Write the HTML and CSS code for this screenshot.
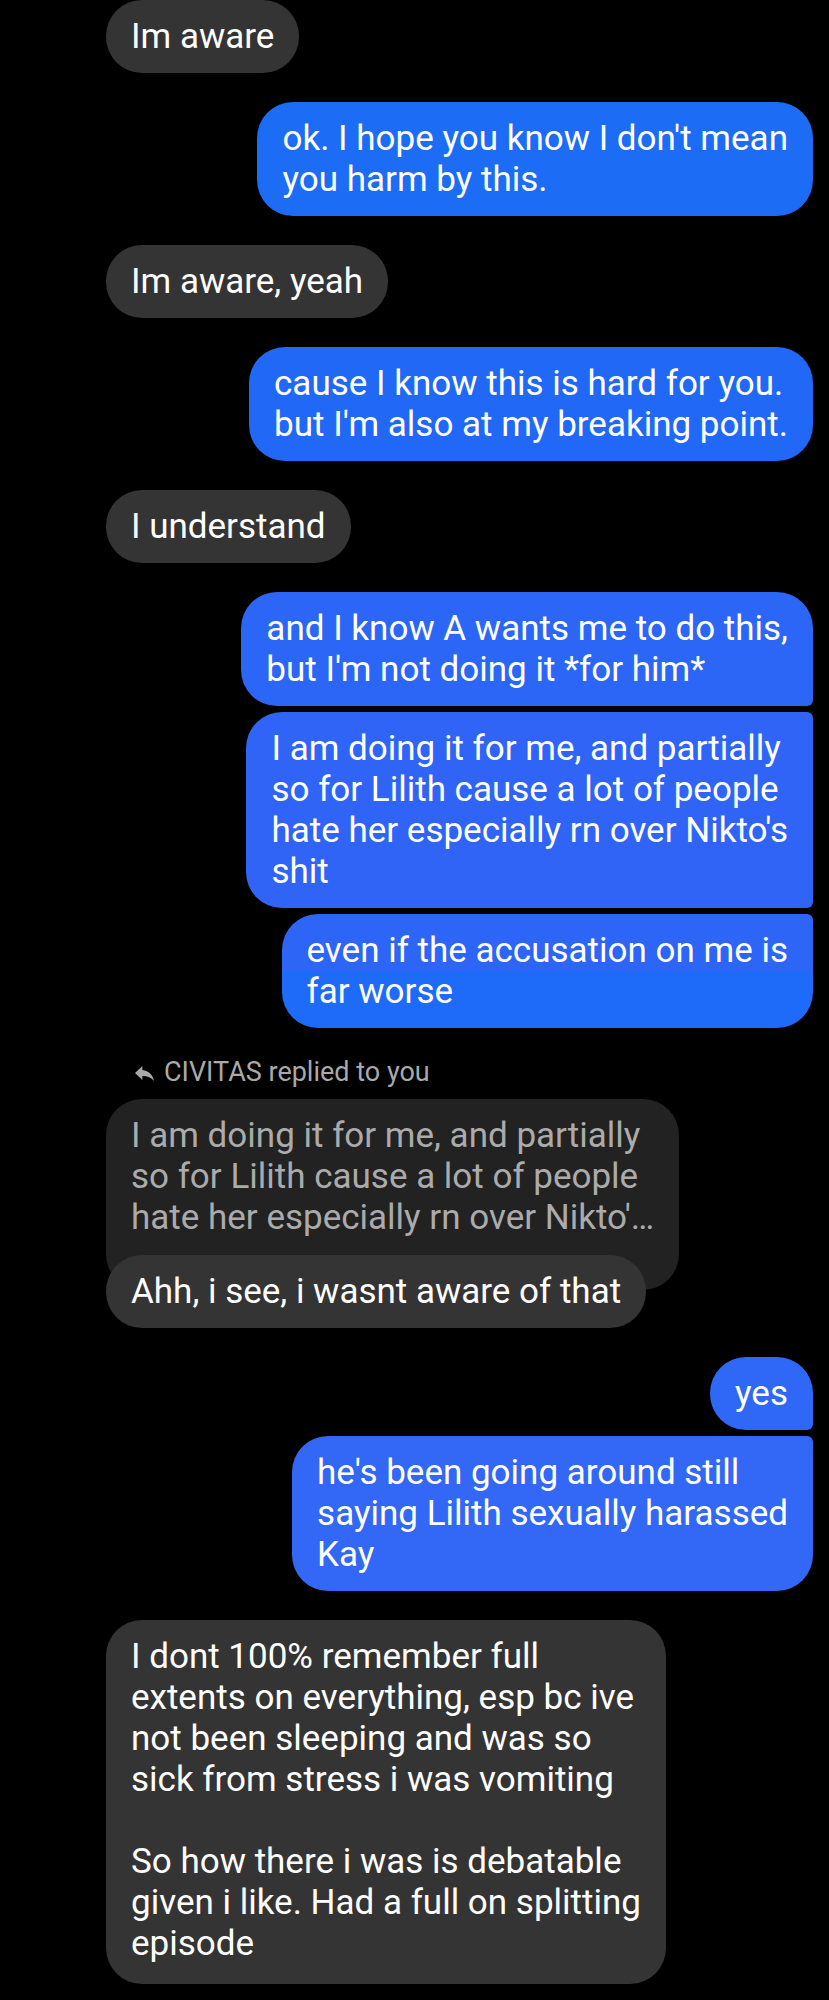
FILE: index.html
```html
<!DOCTYPE html>
<html lang="en">
<head>
<meta charset="utf-8">
<title>Chat</title>
<link rel="stylesheet" href="styles.css">
</head>
<body>
<main class="thread">
  <div class="msg in">Im aware</div>

  <div class="msg out b1 gap">ok. I hope you know I don't mean<br>you harm by this.</div>

  <div class="msg in gap">Im aware, yeah</div>

  <div class="msg out b2 gap">cause I know this is hard for you.<br>but I'm also at my breaking point.</div>

  <div class="msg in gap">I understand</div>

  <div class="msg out b3 gap first">and I know A wants me to do this,<br>but I'm not doing it *for him*</div>
  <div class="msg out b4 tight mid">I am doing it for me, and partially<br>so for Lilith cause a lot of people<br>hate her especially rn over Nikto's<br>shit</div>
  <div class="msg out b5 tight last">even if the accusation on me is<br>far worse</div>

  <div class="reply-label gap">
    <svg class="reply-icon" width="19" height="15" viewBox="3 5 18 15" preserveAspectRatio="none" aria-hidden="true"><path d="M10 9V5l-7 7 7 7v-4.1c5 0 8.5 1.6 11 5.1-1-5-4-10-11-11z" fill="#a9a9a9"/></svg>
    <span>CIVITAS replied to you</span>
  </div>
  <div class="reply-group">
    <div class="quoted">I am doing it for me, and partially<br>so for Lilith cause a lot of people<br>hate her especially rn over Nikto'…</div>
    <div class="msg in overlay">Ahh, i see, i wasnt aware of that</div>
  </div>

  <div class="msg out b6 gap first">yes</div>
  <div class="msg out b7 tight last">he's been going around still<br>saying Lilith sexually harassed<br>Kay</div>

  <div class="msg in gap long">I dont 100% remember full<br>extents on everything, esp bc ive<br>not been sleeping and was so<br>sick from stress i was vomiting<br><br>So how there i was is debatable<br>given i like. Had a full on splitting<br>episode</div>
</main>
</body>
</html>
```

FILE: styles.css
```css
html, body {
  margin: 0;
  padding: 0;
  background: #000;
}

body {
  min-height: 2000px;
  font-family: Roboto, "Noto Sans", "Liberation Sans", sans-serif;
  color: #fff;
}

.thread {
  display: flex;
  flex-direction: column;
  padding: 0 16px 0 106px;
}

.msg {
  font-size: 35px;
  line-height: 41px;
  padding: 16px 25px;
  border-radius: 36px;
  white-space: nowrap;
  color: #fff;
}

.in {
  align-self: flex-start;
  background: #343434;
}

.out {
  align-self: flex-end;
  background: #1e6cf6;
}

.gap { margin-top: 29px; }
.tight { margin-top: 6px; }

.first { border-bottom-right-radius: 6px; }
.mid { border-top-right-radius: 6px; border-bottom-right-radius: 6px; }
.last { border-top-right-radius: 6px; }

.b1 { background: #1c6cf6; }
.b2 { background: #2168f7; }
.b3 { background: #2c66f7; }
.b4 { background: #3064f7; }
.b5 { background: linear-gradient(to bottom, #2d65f6 0, #2d65f6 50%, #1e6bf9 50%, #1e6bf9 100%); }
.b6 { background: #2f67f6; }
.b7 { background: #3367f6; }

.long { padding-bottom: 20px; }

.reply-label {
  display: flex;
  align-items: center;
  gap: 10px;
  margin-left: 29px;
  font-size: 27px;
  line-height: 30px;
  color: #a9a9a9;
}

.reply-icon {
  display: block;
  margin-top: 3px;
}

.reply-group {
  display: flex;
  flex-direction: column;
  align-items: flex-start;
  margin-top: 12px;
}

.quoted {
  font-size: 35px;
  line-height: 41px;
  padding: 16px 25px 52px;
  border-radius: 36px;
  background: #222;
  color: #ababab;
  white-space: nowrap;
}

.overlay {
  position: relative;
  margin-top: -35px;
}
```
